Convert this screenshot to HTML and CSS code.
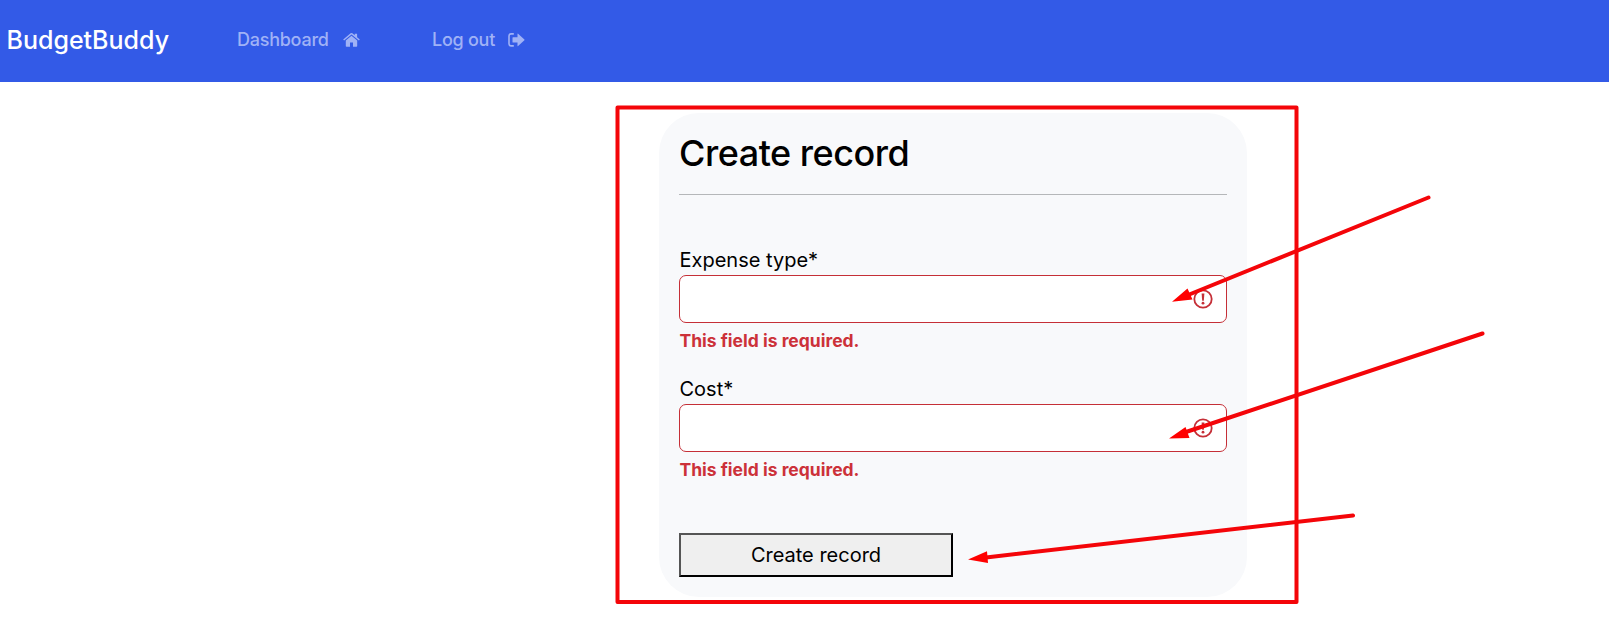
FILE: index.html
```html
<!DOCTYPE html>
<html lang="en">
<head>
<meta charset="utf-8">
<title>BudgetBuddy</title>
<link rel="stylesheet" href="styles.css">
</head>
<body>
<nav class="navbar">
  <a class="brand"><span>BudgetBuddy</span></a>
  <a class="nav-link"><span class="dash">Dashboard</span>
    <svg class="home" width="17" height="14" viewBox="0 0 17 14"><path d="M8.500 2.700 14.200 7.500V13q0 .7-.7.700H10V9.500H7v4.200H3.500q-.7 0-.7-.7V7.500Z"/><path d="M8.500 0q.5 0 .9.300L11.700 2.200V.7h2.400v3.500l2.700 2.300-.9 1.100L8.500 1.500 1.100 7.600.2 6.500 7.600.300Q8 0 8.500 0Z"/></svg>
  </a>
  <a class="nav-link"><span class="logout">Log out</span>
    <svg class="exit" width="17" height="14" viewBox="0 0 17 14"><path d="M5.800.9H3.200Q1 .9 1 3.100V10.700Q1 12.900 3.200 12.900H5.800" fill="none" stroke="currentColor" stroke-width="1.600"/><path d="M5 4.300h4.500V1q0-.7.600-.2l6.300 5.700q.4.400 0 .8l-6.300 5.700q-.6.500-.6-.2V9.500H5q-.5 0-.5-.5V4.800q0-.5.5-.5Z"/></svg>
  </a>
</nav>
<main class="page">
  <form class="card">
    <h1 class="title"><span>Create record</span></h1>
    <div class="field">
      <label class="label" for="type">Expense type*</label>
      <div class="control"><input class="input" id="type" type="text">
        <svg class="alert" width="20" height="20" viewBox="0 0 20 20"><circle cx="10" cy="10" r="8.700"/><path d="M8.600 4.500h2.800l-.6 7.200H9.200Z"/><circle class="dot" cx="10" cy="14.200" r="1.400"/></svg>
      </div>
      <p class="error">This field is required.</p>
    </div>
    <div class="field">
      <label class="label" for="cost">Cost*</label>
      <div class="control"><input class="input" id="cost" type="text">
        <svg class="alert" width="20" height="20" viewBox="0 0 20 20"><circle cx="10" cy="10" r="8.700"/><path d="M8.600 4.500h2.800l-.6 7.200H9.200Z"/><circle class="dot" cx="10" cy="14.200" r="1.400"/></svg>
      </div>
      <p class="error">This field is required.</p>
    </div>
    <button class="submit" type="button">Create record</button>
  </form>
</main>
<svg class="marks" width="1609" height="624" viewBox="0 0 1609 624">
  <rect x="617.500" y="107.500" width="679" height="494.500"/>
  <path d="M1428.500 197.500 1188 295M1482.500 333.500 1186 432M1353 515.500 986 557.500"/>
  <path class="head" d="M1172 301.800 1187.500 288.500 1192.500 299.500ZM1169 438.500 1185.500 427 1189.500 438ZM968 559.500 987 551.300 988 563Z"/>
</svg>
</body>
</html>
```
FILE: styles.css
```css
* { box-sizing: border-box; }
body {
  margin: 0;
  height: 624px;
  overflow: hidden;
  background: #fff;
  color: #000;
  font: 400 20px/30px Inter, sans-serif;
}
.navbar {
  display: flex;
  align-items: center;
  height: 82px;
  padding: 0 0 3px 6.500px;
  background: #335ae7;
}
.brand {
  width: 230.500px;
  color: #fff;
  font-size: 25px;
  font-weight: 500;
}
.nav-link {
  display: flex;
  align-items: center;
  width: 195px;
  color: #a0b2f6;
  font-size: 18px;
  font-weight: 500;
  letter-spacing: -.25px;
}
.nav-link span { padding-top: 1px; }
.nav-link svg { fill: currentColor; }
.home { margin-left: 14px; }
.exit { margin-left: 13px; }
.page { padding: 31px 0 0 659px; }
.card {
  display: flex;
  flex-direction: column;
  width: 588px;
  height: 484px;
  padding: 20px;
  border-radius: 40px;
  background: #f8f9fb;
}
.title {
  height: 62px;
  margin: 0 0 50px;
  border-bottom: 1px solid #b5b7b9;
  font-size: 36px;
  line-height: 40px;
  font-weight: 500;
  letter-spacing: -.48px;
}
.field { height: 130px; }
.label { display: block; height: 30px; padding-left: .5px; }
.control { position: relative; height: 48px; }
.input {
  display: block;
  width: 100%;
  height: 48px;
  border: 1px solid #c52f37;
  border-radius: 7px;
  background: #fff;
  outline: 0;
}
.alert {
  position: absolute;
  right: 14px;
  top: 14px;
  fill: none;
  stroke: #c52f37;
  stroke-width: 1.800;
}
.alert path, .alert .dot { fill: #c52f37; stroke: none; }
.error {
  margin: 5px 0 0;
  padding-left: .5px;
  color: #cc3139;
  font-size: 17.5px;
  line-height: 26px;
  font-weight: 700;
}
.submit {
  width: 274px;
  height: 44px;
  margin-top: 29px;
  padding: 0;
  border: 2px solid;
  border-color: #555 #000 #000 #555;
  border-radius: 0;
  background: #efefef;
  color: #000;
  font: inherit;
}
/* Annotations drawn over the page */
.marks {
  position: absolute;
  left: 0;
  top: 0;
  pointer-events: none;
  fill: none;
  stroke: #f40509;
  stroke-width: 4;
  stroke-linecap: round;
  stroke-linejoin: round;
}
.head { fill: #f00; stroke: none; }
```
